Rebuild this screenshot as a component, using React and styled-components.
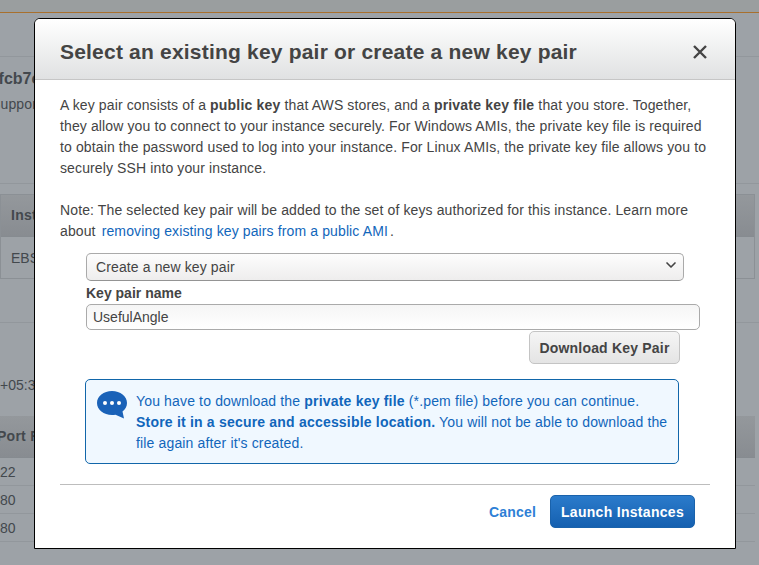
import React from "react";
import styled, { createGlobalStyle } from "styled-components";
import { ChevronDown } from "lucide-react";

const GlobalStyle = createGlobalStyle`
  html, body {
    margin: 0;
    padding: 0;
    height: 565px;
    overflow: hidden;
    background: #9da2a7;
    font-family: "Liberation Sans", Arial, sans-serif;
  }
  * { box-sizing: border-box; }
`;

const Page = styled.div`
  position: relative;
  width: 759px;
  height: 565px;
  overflow: hidden;
  color: #43484d;
  font-size: 14px;
`;

const TopBar = styled.div`
  height: 13px;
  background: #9a9e9f;
  border-bottom: 1px solid #a8702e;
`;

const Section = styled.div`
  height: ${(props) => props.$height}px;
  padding-top: ${(props) => props.$top || 0}px;
  border-bottom: ${(props) => (props.$line ? "1px solid #92979c" : "none")};
`;

const InstanceId = styled.div`
  margin-left: -29px;
  height: 21px;
  line-height: 21px;
  font-size: 16px;
  font-weight: 700;
  white-space: nowrap;
`;

const Support = styled.div`
  margin: 5px 0 0 -9px;
  line-height: 21px;
  letter-spacing: 0.15px;
`;

const Table = styled.div`
  width: 755px;
  border: ${(props) => (props.$boxed ? "1px solid #8b9095" : "none")};
`;

const HeadRow = styled.div`
  height: 42px;
  line-height: 41px;
  text-indent: ${(props) => props.$indent}px;
  font-weight: 700;
  letter-spacing: 0.25px;
  background: linear-gradient(#94989c, #888c91);
  border-bottom: 1px solid #868b90;
`;

const BodyRow = styled.div`
  height: ${(props) => props.$height}px;
  padding-left: ${(props) => props.$pad}px;
  display: flex;
  align-items: center;
  border-bottom: ${(props) => (props.$line ? "1px solid #92979c" : "none")};
`;

const Zone = styled.div`
  margin-top: 52px;
  height: 21px;
  line-height: 21px;
`;

const Modal = styled.div`
  position: absolute;
  left: 34px;
  top: 18px;
  width: 702px;
  height: 531px;
  display: flex;
  flex-direction: column;
  background: #fff;
  border: 1px solid #000;
  border-radius: 6px 6px 0 0;
  overflow: hidden;
`;

const Header = styled.div`
  height: 61px;
  flex: none;
  display: flex;
  align-items: center;
  justify-content: space-between;
  padding: 13px 27px 7px 25px;
  background: linear-gradient(#fff, #e0e1e2);
  border-bottom: 1px solid #c6c6c6;
`;

const Title = styled.h2`
  margin: 0;
  font-size: 21px;
  line-height: 26px;
  font-weight: 700;
  letter-spacing: 0.2px;
  color: #444;
`;

const CloseButton = styled.button`
  width: 16px;
  height: 16px;
  padding: 0;
  border: 0;
  background: none;
  display: flex;
  cursor: pointer;
`;

const Body = styled.div`
  flex: 1;
  padding: 15px 25px 0;
  color: #444;
`;

const Paragraph = styled.p`
  margin: 0 0 21px;
  font-size: 14px;
  line-height: 21px;
  letter-spacing: 0.12px;

  b {
    letter-spacing: 0.2px;
  }
`;

const Anchor = styled.a`
  color: #1166bb;
  text-decoration: none;
  margin: 0 2px;
`;

const Form = styled.div`
  margin: -10px 0 0 26px;
  width: 614px;
`;

const SelectWrap = styled.div`
  position: relative;
  width: 598px;
`;

const Select = styled.select`
  display: block;
  width: 100%;
  height: 28px;
  padding: 0 30px 0 9px;
  appearance: none;
  font: 14px "Liberation Sans", Arial, sans-serif;
  letter-spacing: 0.12px;
  color: #444;
  background: linear-gradient(#fdfdfd, #eeeded);
  border: 1px solid #aaa;
  border-bottom-color: #949494;
  border-radius: 5px;
`;

const Chevron = styled(ChevronDown)`
  position: absolute;
  right: 5px;
  top: 4px;
  pointer-events: none;
`;

const Label = styled.label`
  display: block;
  margin-top: 4px;
  height: 19px;
  line-height: 17px;
  font-weight: 700;
`;

const Input = styled.input`
  display: block;
  width: 100%;
  height: 26px;
  padding: 0 6px;
  font: 14px "Liberation Sans", Arial, sans-serif;
  color: #444;
  background: linear-gradient(#f5f5f5, #fff);
  border: 1px solid #aaa;
  border-radius: 5px;
  outline: none;
`;

const DownloadRow = styled.div`
  display: flex;
  justify-content: flex-end;
  width: 594px;
  margin-top: 1px;
`;

const DownloadButton = styled.button`
  width: 151px;
  height: 33px;
  padding: 0;
  font: 700 14px "Liberation Sans", Arial, sans-serif;
  letter-spacing: 0.2px;
  color: #444;
  background: linear-gradient(#f5f5f5, #e4e4e4);
  border: 1px solid #c4c4c4;
  border-radius: 5px;
  cursor: pointer;
`;

const InfoBox = styled.div`
  display: flex;
  gap: 9px;
  width: 594px;
  height: 85px;
  margin: 15px 0 0 25px;
  padding: 11px 6px 11px 11px;
  color: #1166bb;
  background: #f0f8ff;
  border: 1px solid #1166aa;
  border-radius: 5px;
`;

const InfoIcon = styled.svg`
  flex: none;
  width: 30px;
  height: 28px;
`;

const InfoText = styled.div`
  font-size: 14px;
  line-height: 21px;
  letter-spacing: 0.15px;

  b {
    letter-spacing: 0.2px;
  }
`;

const Divider = styled.hr`
  margin: 20px 0 0;
  border: 0;
  border-top: 1px solid #bdbdbd;
  width: 650px;
`;

const Footer = styled.div`
  display: flex;
  align-items: center;
  justify-content: flex-end;
  gap: 14px;
  width: 635px;
  margin-top: 10px;
`;

const Cancel = styled.a`
  font-weight: 700;
  font-size: 14px;
  letter-spacing: 0.2px;
  color: #2e7fd6;
  cursor: pointer;
`;

const Launch = styled.button`
  width: 145px;
  height: 33px;
  padding: 0;
  font: 700 14px "Liberation Sans", Arial, sans-serif;
  letter-spacing: 0.3px;
  color: #fff;
  background: linear-gradient(#2b7bcb, #1560b0);
  border: 1px solid #1a62ab;
  border-radius: 5px;
  cursor: pointer;
`;

export default function App() {
  return (
    <Page>
      <GlobalStyle />
      <TopBar />
      <Section $height={44} $line />
      <Section $height={127} $line $top={11}>
        <InstanceId>i-0efcb7e</InstanceId>
        <Support>Supported</Support>
      </Section>
      <Section $height={10} />
      <Table $boxed>
        <HeadRow $indent={10}>Instance</HeadRow>
        <BodyRow $height={41} $pad={10}>EBS</BodyRow>
      </Table>
      <Section $height={44} $line />
      <Zone>+05:30</Zone>
      <Section $height={20} />
      <Table>
        <HeadRow $indent={-3}>Port Range</HeadRow>
        <BodyRow $height={28} $pad={0} $line>22</BodyRow>
        <BodyRow $height={28} $pad={0} $line>80</BodyRow>
        <BodyRow $height={28} $pad={0} $line>80</BodyRow>
      </Table>

      <Modal>
        <Header>
          <Title>Select an existing key pair or create a new key pair</Title>
          <CloseButton aria-label="Close">
            <svg width="16" height="16" viewBox="0 0 16 16">
              <path d="M2 2 14 14M14 2 2 14" stroke="#444" strokeWidth="2.4" fill="none" />
            </svg>
          </CloseButton>
        </Header>
        <Body>
          <Paragraph>
            A key pair consists of a <b>public key</b> that AWS stores, and a <b>private key file</b> that you store. Together, they allow you to connect to your instance securely. For Windows AMIs, the private key file is required to obtain the password used to log into your instance. For Linux AMIs, the private key file allows you to securely SSH into your instance.
          </Paragraph>
          <Paragraph>
            Note: The selected key pair will be added to the set of keys authorized for this instance. Learn more about <Anchor href="#">removing existing key pairs from a public AMI</Anchor>.
          </Paragraph>
          <Form>
            <SelectWrap>
              <Select defaultValue="new">
                <option value="new">Create a new key pair</option>
              </Select>
              <Chevron size={16} strokeWidth={2.5} color="#444" />
            </SelectWrap>
            <Label htmlFor="key-name">Key pair name</Label>
            <Input id="key-name" defaultValue="UsefulAngle" />
            <DownloadRow>
              <DownloadButton>Download Key Pair</DownloadButton>
            </DownloadRow>
          </Form>
          <InfoBox>
            <InfoIcon viewBox="0 0 30 28">
              <path d="M15 0C6.7 0 0 5.4 0 12c0 6.6 6.7 12 15 12 1.2 0 2.4-.1 3.5-.3L27 27.500l-1.500-7C28.300 18.500 30 15.400 30 12 30 5.400 23.300 0 15 0Z" fill="#1a62b8" />
              <circle cx="8" cy="12" r="2" fill="#fff" />
              <circle cx="15" cy="12" r="2" fill="#fff" />
              <circle cx="22" cy="12" r="2" fill="#fff" />
            </InfoIcon>
            <InfoText>
              You have to download the <b>private key file</b> (*.pem file) before you can continue. <b>Store it in a secure and accessible location.</b> You will not be able to download the file again after it's created.
            </InfoText>
          </InfoBox>
          <Divider />
          <Footer>
            <Cancel>Cancel</Cancel>
            <Launch>Launch Instances</Launch>
          </Footer>
        </Body>
      </Modal>
    </Page>
  );
}
